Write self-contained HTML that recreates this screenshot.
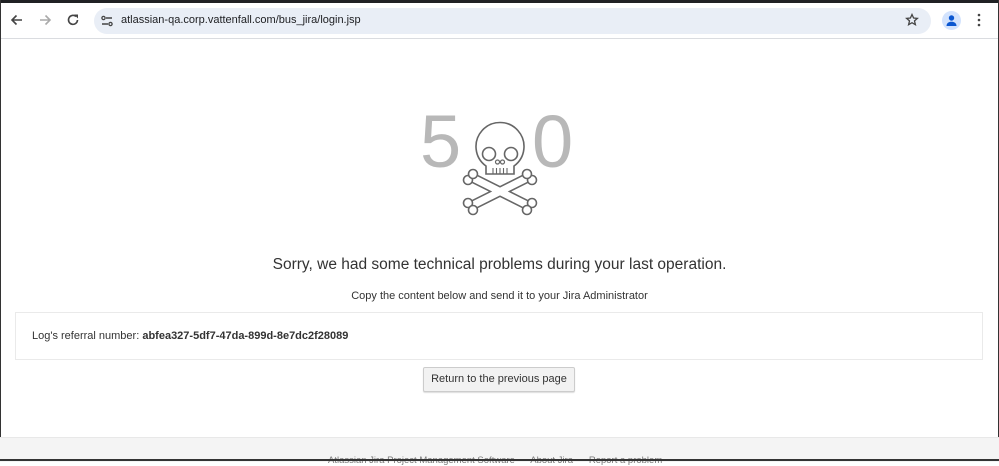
<!DOCTYPE html>
<html><head><style>
body{margin:0;width:999px;height:461px;overflow:hidden;background:#fff;font-family:"Liberation Sans",Arial,sans-serif;position:relative}
.top{position:absolute;left:0;top:0;width:999px;height:3px;background:#202124}
.bar{position:absolute;left:0;top:3px;width:999px;height:35px;background:#fff;border-bottom:1px solid #dadce0}
.omni{position:absolute;left:94px;top:5px;width:837px;height:26px;border-radius:13px;background:#e9eef6}
.url{position:absolute;left:121px;top:11px;font-size:11px;color:#202124}
.edge{position:absolute;top:0;bottom:0;width:1px;background:#333}
.h{position:absolute;left:0;width:999px;text-align:center;color:#333}
.box{position:absolute;left:15px;top:312px;width:966px;height:46px;border:1px solid #eaeaea;font-size:11px;color:#333}
.btn{position:absolute;left:423px;top:367px;width:150px;height:23px;border:1px solid #ccc;border-radius:2px;background:#f2f2f2;font-size:11px;color:#333;text-align:center;line-height:23px;box-shadow:0 1px 1px #ddd}
.foot{position:absolute;left:0;top:437px;width:999px;height:24px;background:#f4f4f4;border-top:1px solid #e8e8e8}
</style></head><body>
<div class="top"></div>
<div class="bar">
<svg style="position:absolute;left:10px;top:10px" width="14" height="14" viewBox="0 0 14 14"><path d="M12 7H2M6.5 2.5L2 7l4.5 4.5" stroke="#444" stroke-width="1.6" fill="none"/></svg>
<svg style="position:absolute;left:38px;top:10px" width="14" height="14" viewBox="0 0 14 14"><path d="M2 7h10M7.5 2.5L12 7l-4.5 4.5" stroke="#aaa" stroke-width="1.6" fill="none"/></svg>
<svg style="position:absolute;left:66px;top:10px" width="14" height="14" viewBox="0 0 14 14"><path d="M11.5 7A4.5 4.5 0 1 1 10 3.5" stroke="#444" stroke-width="1.6" fill="none"/><path d="M8 1.5h4v4z" fill="#444"/></svg>
<div class="omni"></div>
<svg style="position:absolute;left:100px;top:11px" width="14" height="14" viewBox="0 0 14 14"><circle cx="3.5" cy="4" r="1.6" stroke="#444" fill="none" stroke-width="1.3"/><path d="M6 4h6M2 10h6" stroke="#444" stroke-width="1.4"/><circle cx="10.5" cy="10" r="1.6" stroke="#444" fill="none" stroke-width="1.3"/></svg>
<div class="url">atlassian-qa.corp.vattenfall.com/bus_jira/login.jsp</div>
<svg style="position:absolute;left:905px;top:10px" width="14" height="14" viewBox="0 0 14 14"><path d="M7 1.5l1.6 3.5 3.8.4-2.9 2.5.9 3.8L7 9.7l-3.4 2 .9-3.8L1.6 5.4l3.8-.4z" stroke="#444" stroke-width="1.3" fill="none"/></svg>
<div style="position:absolute;left:942px;top:8px;width:19px;height:19px;border-radius:50%;background:#d3e3fd"></div>
<svg style="position:absolute;left:945px;top:11px" width="13" height="13" viewBox="0 0 13 13"><circle cx="6.5" cy="4" r="2.7" fill="#0b57d0"/><path d="M1.5 12c0-3 2.3-4.3 5-4.3s5 1.3 5 4.3z" fill="#0b57d0"/></svg>
<svg style="position:absolute;left:977px;top:10px" width="4" height="14"><circle cx="2" cy="2" r="1.3" fill="#444"/><circle cx="2" cy="7" r="1.3" fill="#444"/><circle cx="2" cy="12" r="1.3" fill="#444"/></svg>
</div>
<div class="edge" style="left:0"></div><div class="edge" style="right:0"></div>

<svg style="position:absolute;left:400px;top:100px" width="200" height="125" viewBox="0 0 200 125">
<text x="20" y="67" font-size="74" font-family="Liberation Sans" fill="#b8b8b8">5</text>
<text x="132" y="67" font-size="74" font-family="Liberation Sans" fill="#b8b8b8">0</text>
<g stroke="#666" stroke-width="1.6" fill="#fff">
<path d="M73 105 L127 78" stroke-width="10" stroke-linecap="round"/>
<path d="M73 78 L127 105" stroke-width="10" stroke-linecap="round"/>
<path d="M73 105 L127 78" stroke="#fff" stroke-width="7" stroke-linecap="round"/>
<path d="M73 78 L127 105" stroke="#fff" stroke-width="7" stroke-linecap="round"/>
<circle cx="68" cy="103" r="4.5"/><circle cx="73" cy="110" r="4.5"/>
<circle cx="132" cy="103" r="4.5"/><circle cx="127" cy="110" r="4.5"/>
<circle cx="68" cy="80" r="4.5"/><circle cx="73" cy="74" r="4.5"/>
<circle cx="132" cy="80" r="4.5"/><circle cx="127" cy="74" r="4.5"/>
<path d="M86 74 L86 66 A24 24 0 1 1 114 66 L114 74 Z"/>
<circle cx="89" cy="54" r="6.5"/><circle cx="111" cy="54" r="6.5"/>
<circle cx="97.5" cy="62" r="2" stroke-width="1.2"/><circle cx="102.5" cy="62" r="2" stroke-width="1.2"/>
<path d="M93 68v6M96.5 68v6M100 68v6M103.5 68v6M107 68v6" stroke-width="1.1"/>
</g>
</svg>

<div class="h" style="top:256px;font-size:15.5px">Sorry, we had some technical problems during your last operation.</div>
<div class="h" style="top:290px;font-size:11px">Copy the content below and send it to your Jira Administrator</div>
<div class="box"><div style="position:absolute;left:16px;top:17px">Log's referral number: <b>abfea327-5df7-47da-899d-8e7dc2f28089</b></div></div>
<div class="btn">Return to the previous page</div>
<div class="foot"><div style="position:absolute;left:328px;top:17px;font-size:9.5px;color:#777;white-space:nowrap">Atlassian Jira Project Management Software &nbsp;&nbsp;&nbsp;&nbsp; About Jira &nbsp;&nbsp;&nbsp;&nbsp; Report a problem</div></div>
<div style="position:absolute;left:0;top:459px;width:999px;height:2px;background:#333"></div>
</body></html>
